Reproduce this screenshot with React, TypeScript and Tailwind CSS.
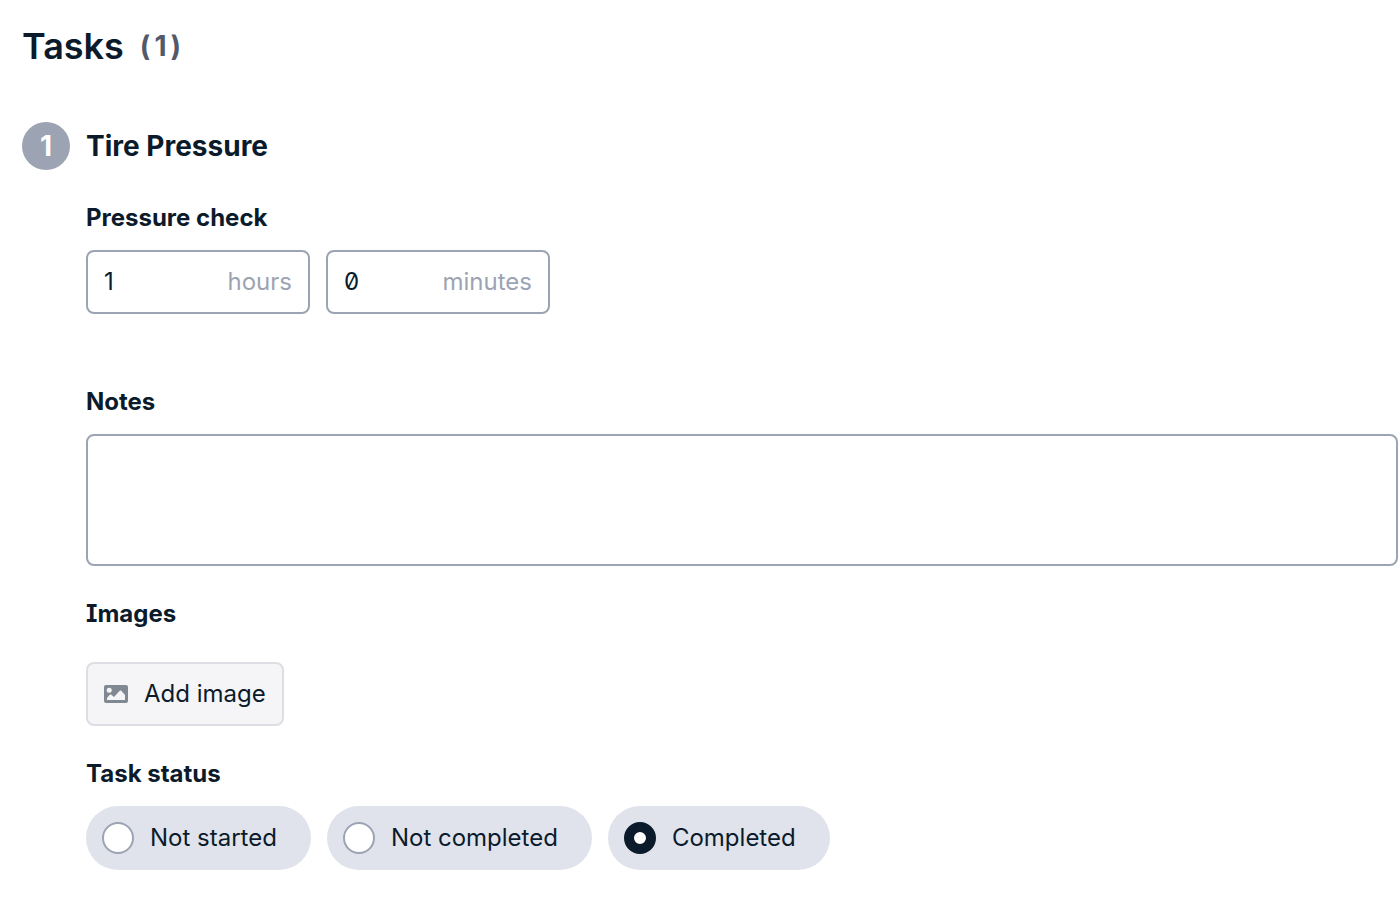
import { useState } from "react";

const STATUSES = ["Not started", "Not completed", "Completed"];

type DurationInputProps = {
  unit: string;
  initial: string;
};

const DurationInput = ({ unit, initial }: DurationInputProps) => {
  const [value, setValue] = useState(initial);

  return (
    <label className="flex h-16 w-56 items-center rounded-lg border-2 border-[#9ca3b2] bg-white px-4">
      <input
        type="text"
        inputMode="numeric"
        value={value}
        onChange={(e) => setValue(e.target.value)}
        className="w-0 min-w-0 flex-1 bg-transparent outline-none"
      />
      <span className="text-[#9ca3b2]">{unit}</span>
    </label>
  );
};

const ImageIcon = () => (
  <svg viewBox="0 0 24 18" className="h-[18px] w-6" aria-hidden="true">
    <rect width="24" height="18" rx="2" fill="#808993" />
    <circle cx="5.2" cy="5.2" r="2.5" fill="#f5f5f8" />
    <path d="M3 15v-2l3-3.4 1 0 3 2.4 6-6.4h1L21 10v5z" fill="#f5f5f8" />
  </svg>
);

type StatusOptionProps = {
  label: string;
  checked: boolean;
  onSelect: () => void;
};

const StatusOption = ({ label, checked, onSelect }: StatusOptionProps) => (
  <label className="flex h-16 items-center gap-4 rounded-full bg-[#e0e3eb] pr-[34px] pl-4">
    <input
      type="radio"
      name="status"
      checked={checked}
      onChange={onSelect}
      className="size-8 appearance-none rounded-full border-2 border-[#9ca3b2] bg-white checked:border-10 checked:border-[#0b1b2b]"
    />
    {label}
  </label>
);

const Task = () => {
  const [status, setStatus] = useState("Completed");

  return (
    <section>
      <div className="flex items-center gap-4">
        <span className="flex size-12 items-center justify-center rounded-full bg-[#9ca3b2] text-[28px] font-bold text-white">
          1
        </span>
        <h2 className="text-[28px] font-bold">Tire Pressure</h2>
      </div>

      <div className="pl-16">
        <fieldset className="mt-8">
          <legend className="font-bold">Pressure check</legend>
          <div className="mt-4 flex gap-4">
            <DurationInput unit="hours" initial="1" />
            <DurationInput unit="minutes" initial="0" />
          </div>
        </fieldset>

        <div className="mt-[72px] flex flex-col gap-4">
          <label htmlFor="notes" className="font-bold">
            Notes
          </label>
          <textarea
            id="notes"
            className="h-[132px] w-full resize-none rounded-lg border-2 border-[#9ca3b2] bg-white px-4 py-3 outline-none"
          />
        </div>

        <h3 className="mt-8 font-bold">Images</h3>
        <button
          type="button"
          className="mt-8 flex h-16 items-center gap-4 rounded-lg border-2 border-[#dddee3] bg-[#f5f5f8] px-4"
        >
          <ImageIcon />
          Add image
        </button>

        <fieldset className="mt-8">
          <legend className="font-bold">Task status</legend>
          <div className="mt-4 flex flex-wrap gap-4">
            {STATUSES.map((label) => (
              <StatusOption
                key={label}
                label={label}
                checked={status === label}
                onSelect={() => setStatus(label)}
              />
            ))}
          </div>
        </fieldset>
      </div>
    </section>
  );
};

export default function App() {
  return (
    <main className="min-h-screen bg-white pt-[26px] pb-9 pl-[22px] font-['Inter',sans-serif] text-2xl/8 text-[#0b1b2b] [font-feature-settings:'zero','cv08']">
      <header className="mb-14 flex items-center gap-4">
        <h1 className="text-4xl font-semibold">Tasks</h1>
        <span className="text-[28px] font-bold text-[#525a69]">
          (<span className="mx-1">1</span>)
        </span>
      </header>
      <Task />
    </main>
  );
}
